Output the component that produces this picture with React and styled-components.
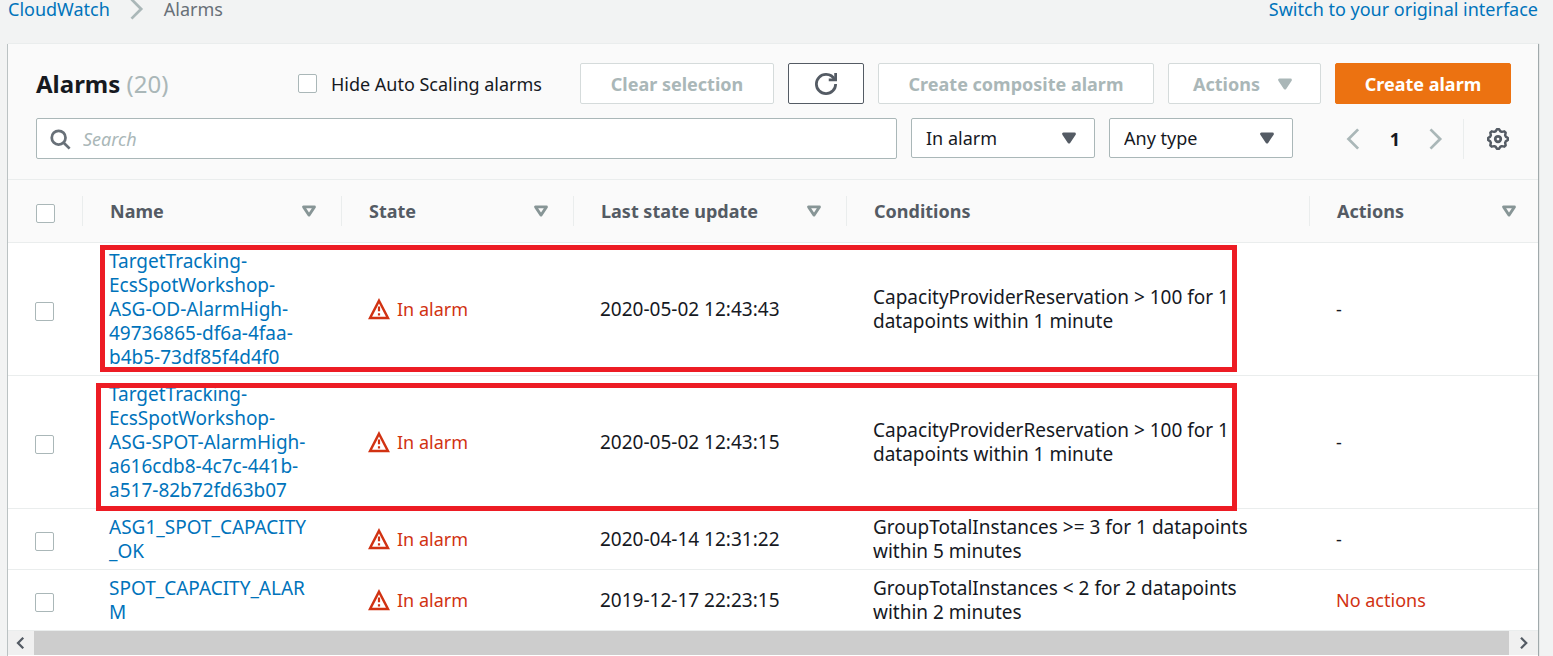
import React from "react";
import styled, { createGlobalStyle } from "styled-components";

const GlobalStyle = createGlobalStyle`
  * { box-sizing: border-box; }
  body {
    margin: 0;
    background: #f2f3f3;
    color: #16191f;
    font: 18px/24px "Noto Sans", "Open Sans", sans-serif;
  }
  button, input, select { font: inherit; color: inherit; }
`;

const Page = styled.div`
  padding: 0 15px 0 8px;
`;

const TopBar = styled.header`
  display: flex;
  align-items: flex-start;
  justify-content: space-between;
  height: 43px;
`;

const Breadcrumbs = styled.nav`
  display: flex;
  align-items: center;
  gap: 16px;
  height: 18px;
  color: #687078;
  line-height: 18px;
`;

const Link = styled.a`
  color: #0073bb;
  text-decoration: none;
  overflow-wrap: anywhere;
`;

const SwitchLink = styled(Link)`
  line-height: 18px;
`;

const Svg = styled.svg`
  display: block;
  flex: none;
  width: 22px;
  height: 22px;
  fill: ${(p) => (p.$solid ? "currentColor" : "none")};
  stroke: currentColor;
  stroke-width: 2;
  color: ${(p) => p.$color || "#545b64"};
`;

const Panel = styled.main`
  background: #fafafa;
  border-top: 1px solid #eaeded;
  box-shadow: 0 1px 1px 0 rgba(0, 28, 36, 0.3), 1px 1px 1px 0 rgba(0, 28, 36, 0.3),
    -1px 1px 0 0 rgba(0, 28, 36, 0.18);
`;

const PanelHeader = styled.div`
  display: flex;
  flex-direction: column;
  gap: 14px;
  padding: 19px 27px 20px 28px;
`;

const Row = styled.div`
  display: flex;
  align-items: center;
  gap: 14px;
`;

const Title = styled.h1`
  flex: 1;
  margin: 0;
  font-size: 24px;
  line-height: 30px;
  font-weight: 700;
`;

const Count = styled.span`
  color: #aab7b8;
  font-weight: 400;
`;

const CheckLabel = styled.label`
  display: flex;
  align-items: center;
  gap: 14px;
  margin-right: 24px;
  white-space: nowrap;
`;

const Checkbox = styled.input.attrs({ type: "checkbox" })`
  appearance: none;
  display: block;
  flex: none;
  width: 19px;
  height: 19px;
  margin: 0;
  background: #fff;
  border: 1px solid #aab7b8;
  border-radius: 2px;
`;

const RowCheckbox = styled(Checkbox)`
  margin-top: 4px;
`;

const Button = styled.button`
  display: flex;
  align-items: center;
  justify-content: center;
  gap: 14px;
  width: ${(p) => p.$width}px;
  height: 41px;
  padding: 0;
  font-weight: 700;
  white-space: nowrap;
  border: 1px solid #545b64;
  border-radius: 2px;
  background: #fff;
  color: #545b64;
  &:disabled {
    color: #aab7b8;
    border-color: #d5dbdb;
  }
`;

const PrimaryButton = styled(Button)`
  color: #fff;
  background: #ec7211;
  border-color: #ec7211;
`;

const SearchBox = styled.label`
  flex: 1;
  display: flex;
  align-items: center;
  gap: 12px;
  height: 41px;
  padding: 0 12px;
  background: #fff;
  border: 1px solid #aab7b8;
  border-radius: 2px;
`;

const SearchInput = styled.input`
  flex: 1;
  min-width: 0;
  padding: 0;
  border: 0;
  outline: 0;
  background: none;
  &::placeholder {
    color: #aab7b8;
    font-style: italic;
    opacity: 1;
  }
`;

const SelectWrap = styled.div`
  display: grid;
  align-items: center;
  width: 184px;
  height: 40px;
  align-self: flex-start;
  & > * { grid-area: 1 / 1; }
  & > svg {
    justify-self: end;
    margin-right: 15px;
    pointer-events: none;
  }
`;

const Select = styled.select`
  appearance: none;
  width: 100%;
  height: 40px;
  padding: 0 14px;
  background: #fff;
  border: 1px solid #aab7b8;
  border-radius: 2px;
`;

const Pager = styled.nav`
  display: flex;
  align-items: center;
  gap: 20px;
  height: 40px;
  margin-left: 36px;
  padding-right: 16px;
  border-right: 1px solid #eaeded;
`;

const IconButton = styled.button`
  display: flex;
  padding: 0;
  border: 0;
  background: none;
`;

const PageNumber = styled.span`
  width: 20px;
  text-align: center;
  font-weight: 700;
`;

const Settings = styled(IconButton)`
  margin-left: 9px;
  margin-right: 2px;
`;

const TableArea = styled.div`
  position: relative;
`;

const Table = styled.table`
  width: 100%;
  table-layout: fixed;
  border-collapse: separate;
  border-spacing: 0;
`;

const Col = styled.col`
  width: ${(p) => (p.$width ? `${p.$width}px` : "auto")};
`;

const HeadCell = styled.th`
  height: 64px;
  padding: 0;
  text-align: left;
  font-weight: 700;
  color: #545b64;
  border-top: 1px solid #eaeded;
  border-bottom: 1px solid #eaeded;
`;

const HeadInner = styled.div`
  display: flex;
  align-items: center;
  justify-content: space-between;
  height: 30px;
  padding: 0 ${(p) => (p.$last ? 18 : 21)}px 0 ${(p) => (p.$select ? 28 : 27)}px;
  border-right: ${(p) => (p.$last ? "0" : "1px solid #eaeded")};
`;

const Cell = styled.td`
  padding: 6px 28px 6px 26px;
  font-size: ${(p) => (p.$large ? 19 : 18)}px;
  vertical-align: middle;
  background: #fff;
  border-bottom: 1px solid #eaeded;
  tr:last-child > & { border-bottom: 0; }
`;

const SelectCell = styled(Cell)`
  padding-left: 27px;
`;

const Status = styled.span`
  display: flex;
  align-items: center;
  gap: 7px;
  color: #d13212;
`;

const Danger = styled.span`
  color: #d13212;
`;

const Highlight = styled.div`
  position: absolute;
  top: ${(p) => p.$top}px;
  left: ${(p) => p.$left}px;
  right: 301px;
  height: ${(p) => p.$height}px;
  border: 5px solid #ed1c24;
  pointer-events: none;
`;

const ScrollBar = styled.div`
  display: flex;
  height: 26px;
  border-top: 1px solid #eaeded;
  border-bottom: 1px solid #fff;
  background: #f0f0f0;
`;

const ScrollButton = styled.button`
  display: flex;
  align-items: center;
  justify-content: center;
  width: ${(p) => p.$width}px;
  padding: 0;
  border: 0;
  background: #f0f0f0;
  & > svg {
    width: 12px;
    height: 12px;
    stroke-width: 3;
  }
`;

const ScrollThumb = styled.div`
  flex: 1;
  background: #cdcdcd;
`;

const Icon = ({ children, ...rest }) => (
  <Svg viewBox="0 0 16 16" aria-hidden="true" {...rest}>
    {children}
  </Svg>
);
const AngleRight = (p) => <Icon {...p}><path d="m4 1 7 7-7 7" /></Icon>;
const AngleLeft = (p) => <Icon {...p}><path d="M11 1 4 8l7 7" /></Icon>;
const Caret = (p) => (
  <Icon {...p} $solid><path d="M4 5h8l-4 6-4-6z" strokeLinejoin="round" /></Icon>
);
const SortIcon = () => (
  <Icon $color="#879596"><path d="M4 5h8l-4 6-4-6z" strokeLinejoin="round" /></Icon>
);
const RefreshIcon = () => (
  <Icon>
    <path d="M10 5h5V0" />
    <path d="M15 8a6.957 6.957 0 0 1-7 7 6.957 6.957 0 0 1-7-7 6.957 6.957 0 0 1 7-7 6.87 6.87 0 0 1 6.3 4" />
  </Icon>
);
const SearchIcon = () => (
  <Icon $color="#687078">
    <circle cx="7" cy="7" r="5" />
    <path d="m15 15-4.5-4.5" />
  </Icon>
);
const WarningIcon = () => (
  <Icon $color="#d13212">
    <path d="m8 2 6.5 12.5h-13L8 2z" strokeWidth="1.8" />
    <path d="M8 6.2v3.4M8 11v1.8" strokeWidth="1.6" />
  </Icon>
);
const gearPoints = Array.from({ length: 32 }, (_, i) => {
  const angle = ((i - 0.5) * Math.PI) / 16;
  const radius = i % 4 < 2 ? 7.2 : 5.9;
  return `${8 + radius * Math.cos(angle)},${8 + radius * Math.sin(angle)}`;
}).join(" ");
const GearIcon = () => (
  <Icon>
    <polygon points={gearPoints} strokeWidth="1.8" strokeLinejoin="round" />
    <circle cx="8" cy="8" r="2" />
  </Icon>
);

const columns = [
  { label: "Name", width: 259, sortable: true },
  { label: "State", width: 232, sortable: true },
  { label: "Last state update", width: 273, sortable: true },
  { label: "Conditions" },
  { label: "Actions", width: 228, sortable: true },
];

const alarms = [
  {
    name: "TargetTracking-EcsSpotWorkshop-ASG-OD-AlarmHigh-49736865-df6a-4faa-b4b5-73df85f4d4f0",
    updated: "2020-05-02 12:43:43",
    condition: "CapacityProviderReservation > 100 for 1 datapoints within 1 minute",
  },
  {
    name: "TargetTracking-EcsSpotWorkshop-ASG-SPOT-AlarmHigh-a616cdb8-4c7c-441b-a517-82b72fd63b07",
    updated: "2020-05-02 12:43:15",
    condition: "CapacityProviderReservation > 100 for 1 datapoints within 1 minute",
  },
  {
    name: "ASG1_SPOT_CAPACITY_OK",
    updated: "2020-04-14 12:31:22",
    condition: "GroupTotalInstances >= 3 for 1 datapoints within 5 minutes",
  },
  {
    name: "SPOT_CAPACITY_ALARM",
    updated: "2019-12-17 22:23:15",
    condition: "GroupTotalInstances < 2 for 2 datapoints within 2 minutes",
    noActions: true,
  },
];

export default function App() {
  return (
    <>
      <GlobalStyle />
      <Page>
        <TopBar>
          <Breadcrumbs aria-label="Breadcrumbs">
            <Link href="#cloudwatch">CloudWatch</Link>
            <AngleRight $color="#aab7b8" />
            <span>Alarms</span>
          </Breadcrumbs>
          <SwitchLink href="#original">Switch to your original interface</SwitchLink>
        </TopBar>
        <Panel>
          <PanelHeader>
            <Row>
              <Title>
                Alarms <Count>(20)</Count>
              </Title>
              <CheckLabel>
                <Checkbox />
                Hide Auto Scaling alarms
              </CheckLabel>
              <Button $width={194} disabled>Clear selection</Button>
              <Button $width={76} aria-label="Refresh"><RefreshIcon /></Button>
              <Button $width={276} disabled>Create composite alarm</Button>
              <Button $width={153} disabled>
                Actions <Caret $color="#aab7b8" />
              </Button>
              <PrimaryButton $width={176}>Create alarm</PrimaryButton>
            </Row>
            <Row>
              <SearchBox>
                <SearchIcon />
                <SearchInput placeholder="Search" aria-label="Search" />
              </SearchBox>
              <SelectWrap>
                <Select aria-label="State filter"><option>In alarm</option></Select>
                <Caret />
              </SelectWrap>
              <SelectWrap>
                <Select aria-label="Type filter"><option>Any type</option></Select>
                <Caret />
              </SelectWrap>
              <Pager aria-label="Pagination">
                <IconButton aria-label="Previous page"><AngleLeft $color="#aab7b8" /></IconButton>
                <PageNumber>1</PageNumber>
                <IconButton aria-label="Next page"><AngleRight $color="#aab7b8" /></IconButton>
              </Pager>
              <Settings aria-label="Preferences"><GearIcon /></Settings>
            </Row>
          </PanelHeader>
          <TableArea>
            <Table>
              <colgroup>
                <Col $width={75} />
                {columns.map((c) => <Col key={c.label} $width={c.width} />)}
              </colgroup>
              <thead>
                <tr>
                  <HeadCell>
                    <HeadInner $select><RowCheckbox aria-label="Select all alarms" /></HeadInner>
                  </HeadCell>
                  {columns.map((c, i) => (
                    <HeadCell key={c.label} scope="col">
                      <HeadInner $last={i === columns.length - 1}>
                        {c.label}
                        {c.sortable && <SortIcon />}
                      </HeadInner>
                    </HeadCell>
                  ))}
                </tr>
              </thead>
              <tbody>
                {alarms.map((a) => (
                  <tr key={a.name}>
                    <SelectCell><RowCheckbox aria-label={`Select ${a.name}`} /></SelectCell>
                    <Cell $large><Link href="#alarm">{a.name}</Link></Cell>
                    <Cell><Status><WarningIcon />In alarm</Status></Cell>
                    <Cell $large>{a.updated}</Cell>
                    <Cell $large>{a.condition}</Cell>
                    <Cell>{a.noActions ? <Danger>No actions</Danger> : "-"}</Cell>
                  </tr>
                ))}
              </tbody>
            </Table>
            <Highlight $top={66} $left={92} $height={127} />
            <Highlight $top={204} $left={88} $height={128} />
          </TableArea>
          <ScrollBar>
            <ScrollButton $width={26} aria-label="Scroll left"><AngleLeft /></ScrollButton>
            <ScrollThumb />
            <ScrollButton $width={29} aria-label="Scroll right"><AngleRight /></ScrollButton>
          </ScrollBar>
        </Panel>
      </Page>
    </>
  );
}
